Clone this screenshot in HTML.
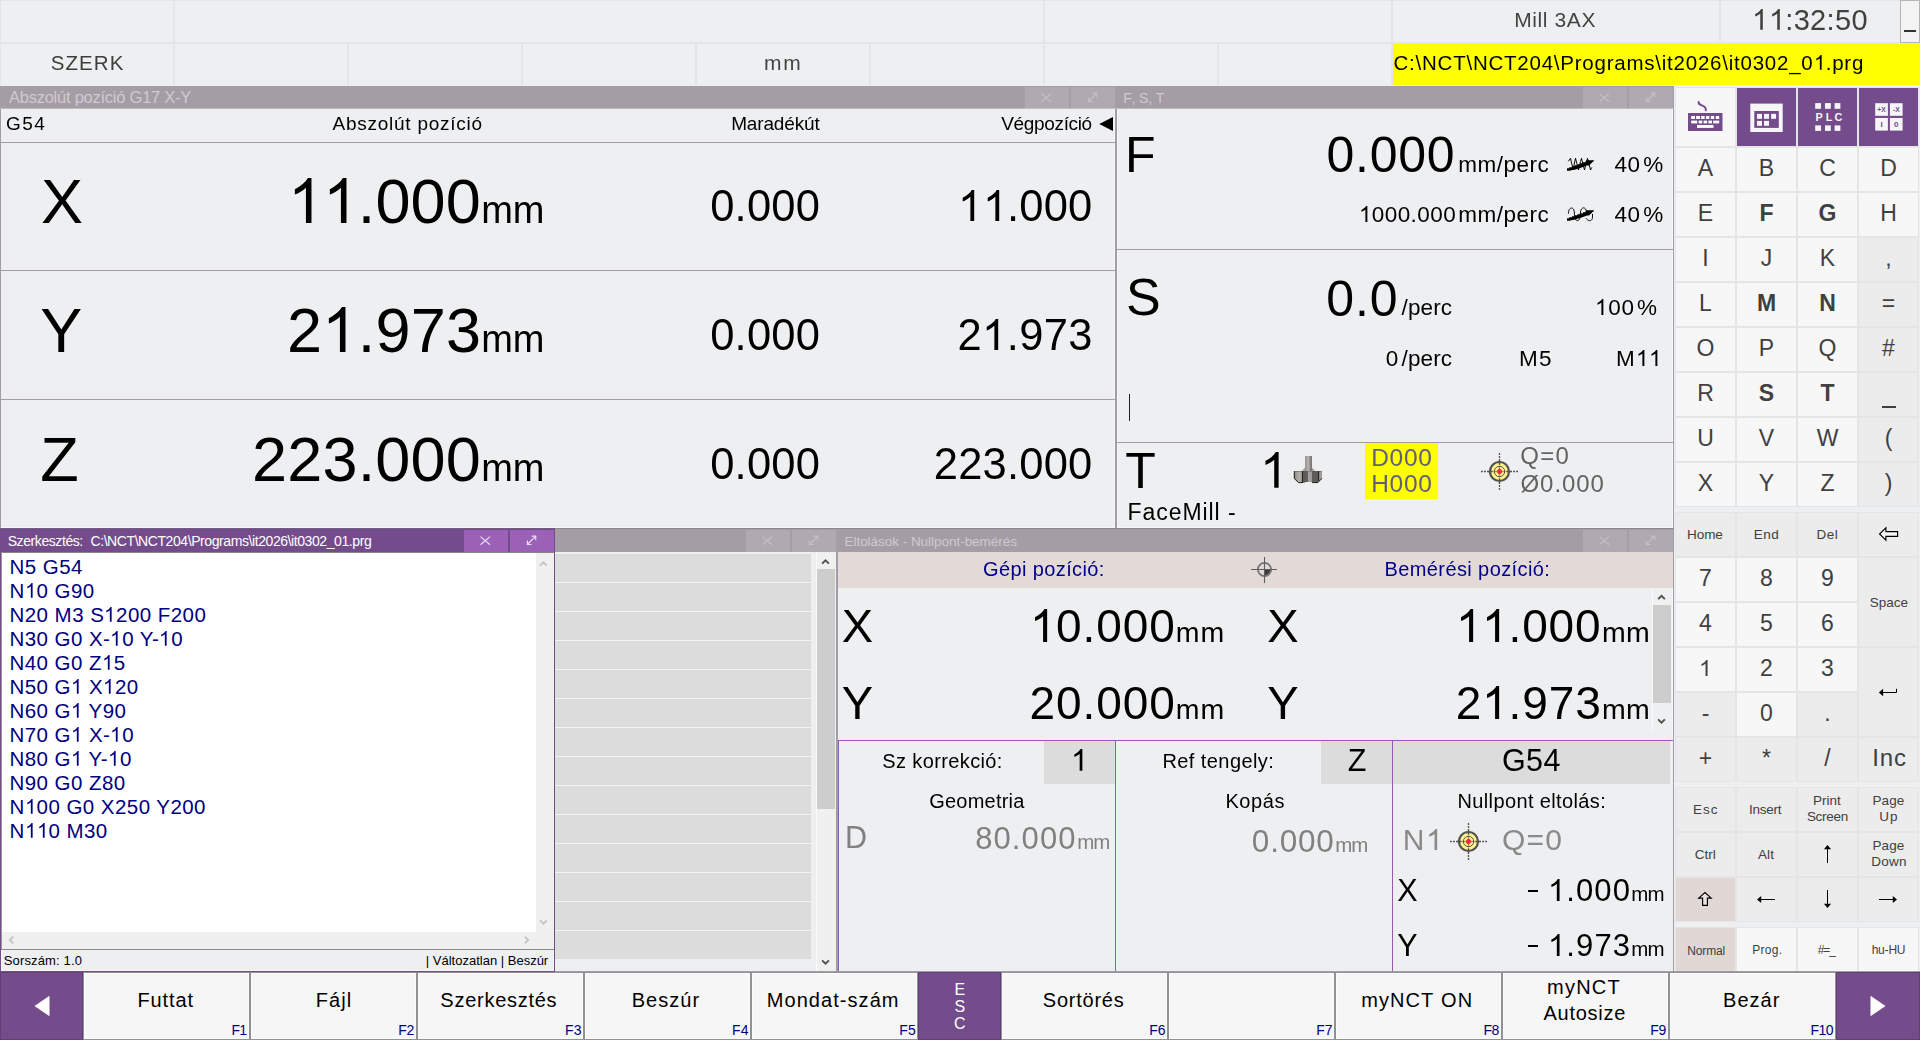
<!DOCTYPE html>
<html><head><meta charset="utf-8"><title>NCT</title>
<style>
html,body{margin:0;padding:0;}
body{width:1920px;height:1040px;overflow:hidden;background:#eeeff1;font-family:"Liberation Sans",sans-serif;position:relative;color:#000;}
.t{position:absolute;line-height:1;white-space:nowrap;font-kerning:none;}
.g1{width:0.55615em;height:0.7158em;vertical-align:baseline;display:inline-block;}
.r{position:absolute;}
.gl{position:absolute;left:0;top:0;width:1920px;height:1040px;will-change:transform;}
</style></head><body>
<div class="r" style="left:0px;top:42px;width:1392px;height:2px;background:#e4e5e7;"></div>
<div class="r" style="left:1392px;top:42px;width:528px;height:2px;background:#e4e5e7;"></div>
<div class="r" style="left:173px;top:0px;width:2px;height:43px;background:#e4e5e7;"></div>
<div class="r" style="left:1043px;top:0px;width:2px;height:43px;background:#e4e5e7;"></div>
<div class="r" style="left:1391px;top:0px;width:2px;height:43px;background:#e4e5e7;"></div>
<div class="r" style="left:1719px;top:0px;width:2px;height:43px;background:#e4e5e7;"></div>
<div class="r" style="left:173px;top:43px;width:2px;height:42px;background:#e4e5e7;"></div>
<div class="r" style="left:347px;top:43px;width:2px;height:42px;background:#e4e5e7;"></div>
<div class="r" style="left:521px;top:43px;width:2px;height:42px;background:#e4e5e7;"></div>
<div class="r" style="left:695px;top:43px;width:2px;height:42px;background:#e4e5e7;"></div>
<div class="r" style="left:869px;top:43px;width:2px;height:42px;background:#e4e5e7;"></div>
<div class="r" style="left:1043px;top:43px;width:2px;height:42px;background:#e4e5e7;"></div>
<div class="r" style="left:1217px;top:43px;width:2px;height:42px;background:#e4e5e7;"></div>
<div class="r" style="left:1391px;top:43px;width:2px;height:42px;background:#e4e5e7;"></div>
<div class="r" style="left:0px;top:0px;width:1920px;height:1px;background:#e4e5e7;"></div>
<div class="r" style="left:0px;top:0px;width:1px;height:86px;background:#e4e5e7;"></div>
<div class="r" style="left:1900px;top:0px;width:20px;height:43px;background:#f3f3f4;border:1px solid #b5b5b8;box-sizing:border-box;"></div>
<div class="r" style="left:1904px;top:30px;width:12px;height:2px;background:#333;"></div>
<div class="r" style="left:1393px;top:44px;width:527px;height:41px;background:#ffff00;"></div>
<div class="r" style="left:0px;top:86px;width:1117px;height:23px;background:#a49da5;"></div>
<div class="r" style="left:1025px;top:87px;width:44px;height:22px;background:#b0a9b1;"></div>
<div class="r" style="left:1071px;top:87px;width:44px;height:22px;background:#b0a9b1;"></div>
<svg class="r" style="left:1040px;top:91px;" width="13" height="13" viewBox="0 0 13 13"><g transform="translate(0.500,0.800)"><path d="M1 1.8 L10.5 10 M10.5 1.8 L1 10" stroke="#c6bfc8" stroke-width="1.2" fill="none"/></g></svg>
<svg class="r" style="left:1086px;top:91px;" width="13" height="13" viewBox="0 0 13 13"><g transform="translate(0.800,0.600)"><path d="M1.6 9.9 L9.9 1.6 M5.8 1.6 H9.9 V5.7 M1.6 5.8 V9.9 H5.7" stroke="#c6bfc8" stroke-width="1.2" fill="none"/></g></svg>
<div class="t" style="left:8.98px;top:89.00px;font-size:16.5px;letter-spacing:-0.244px;color:#d0c9d3;">Abszolút pozíció G17 X-Y</div>
<div class="r" style="left:0px;top:109px;width:1px;height:420px;background:#a29da4;"></div>
<div class="r" style="left:1115px;top:109px;width:2px;height:420px;background:#a29da4;"></div>
<div class="r" style="left:1px;top:527px;width:1113px;height:1px;background:#f6f7f9;"></div>
<div class="r" style="left:1114px;top:109px;width:1px;height:419px;background:#f6f7f9;"></div>
<div class="r" style="left:1px;top:142px;width:1114px;height:1px;background:#a29da4;"></div>
<div class="r" style="left:1px;top:270px;width:1114px;height:1px;background:#a29da4;"></div>
<div class="r" style="left:1px;top:399px;width:1114px;height:1px;background:#a29da4;"></div>
<svg class="r" style="left:1099px;top:116px;" width="15" height="16" viewBox="0 0 15 16"><path d="M14 1 L0.2 8 L14 15 Z" fill="#000"/></svg>
<div class="r" style="left:1117px;top:86px;width:557px;height:23px;background:#a49da5;"></div>
<div class="r" style="left:1583px;top:87px;width:44px;height:22px;background:#b0a9b1;"></div>
<div class="r" style="left:1629px;top:87px;width:44px;height:22px;background:#b0a9b1;"></div>
<svg class="r" style="left:1598px;top:91px;" width="13" height="13" viewBox="0 0 13 13"><g transform="translate(0.500,0.800)"><path d="M1 1.8 L10.5 10 M10.5 1.8 L1 10" stroke="#c6bfc8" stroke-width="1.2" fill="none"/></g></svg>
<svg class="r" style="left:1644px;top:91px;" width="13" height="13" viewBox="0 0 13 13"><g transform="translate(0.800,0.600)"><path d="M1.6 9.9 L9.9 1.6 M5.8 1.6 H9.9 V5.7 M1.6 5.8 V9.9 H5.7" stroke="#c6bfc8" stroke-width="1.2" fill="none"/></g></svg>
<div class="t" style="left:1123.15px;top:91.00px;font-size:14px;letter-spacing:-0.139px;color:#d0c9d3;">F, S, T</div>
<div class="r" style="left:1673px;top:86px;width:1px;height:443px;background:#a29da4;"></div>
<div class="r" style="left:1672px;top:109px;width:1px;height:418px;background:#f6f7f9;"></div>
<div class="r" style="left:0px;top:108px;width:1674px;height:1px;background:rgba(238,239,241,0.35);"></div>
<div class="r" style="left:1117px;top:109px;width:1px;height:419px;background:#f6f7f9;"></div>
<div class="r" style="left:1117px;top:527px;width:556px;height:1px;background:#f6f7f9;"></div>
<div class="r" style="left:1117px;top:249px;width:556px;height:1px;background:#a29da4;"></div>
<div class="r" style="left:1117px;top:442px;width:556px;height:1px;background:#a29da4;"></div>
<svg class="r" style="left:1562px;top:153px;" width="38" height="23" viewBox="0 0 38 23"><path d="M6.3 8.4 L8.5 5.3 L9.6 10 L11.2 17 L12.6 9 L13.5 5.3 L14.8 10.5 L16.5 17 L18.5 8.5 L19.5 5.3 L20.6 10 L22.5 17 L24.5 8.5 L25.5 5.3 L27 11 L28.5 17 L29.8 14.4" stroke="#000" stroke-width="0.95" fill="none"/><path d="M5 17.7 V15.2 L7.2 15.2 L7.2 14.2 L10 14.2 L10 13.2 L12.6 13.2 L12.6 12.2 L15.4 12.2 L15.4 11.2 L18 11.2 L18 10.2 L21 10.2 L21 9.2 L23.6 9.2 L23.6 8.2 L24.6 7.2 L32.2 7.2 L31.4 8.4 L30.2 9.2 L29.2 10.4 L28 11.4 L27 12.6 L25 12.6 L22.4 13.4 L19.6 14.4 L16.4 15.4 L13.6 16.4 L10.6 17 L7.2 17.7 Z" fill="#000"/></svg>
<svg class="r" style="left:1562px;top:203px;" width="38" height="23" viewBox="0 0 38 23"><path d="M6.4 10.8 C6.4 3.4 12 3.4 12.3 9 C12.6 16 13.5 17.6 15.5 17.6 C17.5 17.6 18.2 15 18.4 10 C18.6 3.4 24 3.4 24.3 8.5 M30.5 11 L30.5 14.2 C30.3 17.5 28.5 17.7 27.5 17.6 C26 17.5 25 16.5 24 15.2" stroke="#000" stroke-width="0.95" fill="none"/><path d="M5 17.7 V15.2 L7.2 15.2 L7.2 14.2 L10 14.2 L10 13.2 L12.6 13.2 L12.6 12.2 L15.4 12.2 L15.4 11.2 L18 11.2 L18 10.2 L21 10.2 L21 9.2 L23.6 9.2 L23.6 8.2 L24.6 7.2 L32.2 7.2 L31.4 8.4 L30.2 9.2 L29.2 10.4 L28 11.4 L27 12.6 L25 12.6 L22.4 13.4 L19.6 14.4 L16.4 15.4 L13.6 16.4 L10.6 17 L7.2 17.7 Z" fill="#000"/></svg>
<div class="r" style="left:1129px;top:394px;width:1px;height:27px;background:#222;"></div>
<div class="r" style="left:1365px;top:443px;width:73px;height:56px;background:#ffff00;"></div>
<svg class="r" style="left:1479px;top:451px;" width="41" height="41" viewBox="0 0 41 41"><g transform="translate(0.500,0.500)"><path d="M9.4 20 H1.5 M30.6 20 H38.5 M20 9.4 V1.5 M20 30.6 V38.5" stroke="#575252" stroke-width="1.35" stroke-dasharray="1.9 1.1" fill="none"/><circle cx="20" cy="20" r="9.5" fill="#fff48c" stroke="#575252" stroke-width="2.2"/><path d="M9 20 H13.2 M26.8 20 H31 M20 9 V13.2 M20 26.8 V31" stroke="#575252" stroke-width="1.4"/><circle cx="20" cy="20" r="5.2" fill="none" stroke="#575252" stroke-width="1"/><path d="M14.2 20 H16 M24 20 H25.8 M20 14.2 V16 M20 24 V25.8" stroke="#575252" stroke-width="1.3"/><path d="M20 16.6 L23.4 20 L20 23.4 L16.6 20 Z" fill="#ee2b3b"/></g></svg>
<svg class="r" style="left:1285px;top:448px;" width="50" height="44" viewBox="0 0 50 44"><defs><linearGradient id="shk" x1="0" x2="1" y1="0" y2="0"><stop offset="0" stop-color="#8d8a87"/><stop offset="0.45" stop-color="#b9b6b1"/><stop offset="1" stop-color="#666"/></linearGradient>
<linearGradient id="bl" x1="0" x2="1" y1="0" y2="0"><stop offset="0" stop-color="#8f8c89"/><stop offset="0.6" stop-color="#b3b0ab"/><stop offset="1" stop-color="#a5a29e"/></linearGradient></defs>
<path d="M17 23 L20.1 19.6 H26.9 L30 23 Z" fill="#a29f9b"/>
<rect x="20.1" y="8" width="6.8" height="15" fill="url(#shk)"/>
<path d="M9.2 23 H37 V30.5 L32.8 34.8 H13.4 L9.2 30.5 Z" fill="#5e5c5a"/>
<path d="M9.6 23.4 H17 V34.4 H13.6 L9.6 30.3 Z" fill="url(#bl)"/>
<rect x="22.9" y="23.4" width="4" height="10.6" fill="#a4a19d"/>
<path d="M34 23.4 H37 V30.3 L34 33.3 Z" fill="#9f9c98"/>
<rect x="33" y="23.2" width="1.1" height="9.5" fill="#222"/>
<rect x="16.9" y="23.2" width="1.1" height="11.2" fill="#222"/>
<path d="M9.3 23.2 V30.5 L13.5 34.6 H18" stroke="#1a1a1a" stroke-width="0.9" fill="none"/>
<path d="M27.2 34.6 H32.8 L37 30.3" stroke="#1a1a1a" stroke-width="0.9" fill="none"/>
<path d="M20.5 34 H26.5 L27.2 35 H19.5 Z" fill="#eeeff1"/></svg>
<div class="r" style="left:1675px;top:86px;width:245px;height:886px;background:#eeeff1;"></div>
<div class="r" style="left:1676px;top:88px;width:59px;height:58px;background:#f7f7f7;box-shadow:0 0 0 1px #e4e5e7;"></div>
<div class="r" style="left:1737px;top:88px;width:59px;height:58px;background:#744c8c;box-shadow:0 0 0 1px #e4e5e7;"></div>
<div class="r" style="left:1798px;top:88px;width:59px;height:58px;background:#744c8c;box-shadow:0 0 0 1px #e4e5e7;"></div>
<div class="r" style="left:1859px;top:88px;width:59px;height:58px;background:#744c8c;box-shadow:0 0 0 1px #e4e5e7;"></div>
<div class="r" style="left:1676px;top:148px;width:59px;height:43px;background:#f7f7f7;box-shadow:0 0 0 1px #e4e5e7;"></div>
<div class="t" style="top:157.00px;font-size:23px;color:#404040;left:1305.5px;width:800px;text-align:center;">A</div>
<div class="r" style="left:1737px;top:148px;width:59px;height:43px;background:#f7f7f7;box-shadow:0 0 0 1px #e4e5e7;"></div>
<div class="t" style="top:157.00px;font-size:23px;color:#404040;left:1366.5px;width:800px;text-align:center;">B</div>
<div class="r" style="left:1798px;top:148px;width:59px;height:43px;background:#f7f7f7;box-shadow:0 0 0 1px #e4e5e7;"></div>
<div class="t" style="top:157.00px;font-size:23px;color:#404040;left:1427.5px;width:800px;text-align:center;">C</div>
<div class="r" style="left:1859px;top:148px;width:59px;height:43px;background:#f7f7f7;box-shadow:0 0 0 1px #e4e5e7;"></div>
<div class="t" style="top:157.00px;font-size:23px;color:#404040;left:1488.5px;width:800px;text-align:center;">D</div>
<div class="r" style="left:1676px;top:193px;width:59px;height:43px;background:#f7f7f7;box-shadow:0 0 0 1px #e4e5e7;"></div>
<div class="t" style="top:202.00px;font-size:23px;color:#404040;left:1305.5px;width:800px;text-align:center;">E</div>
<div class="r" style="left:1737px;top:193px;width:59px;height:43px;background:#f7f7f7;box-shadow:0 0 0 1px #e4e5e7;"></div>
<div class="t" style="top:202.00px;font-size:23px;color:#404040;font-weight:bold;left:1366.5px;width:800px;text-align:center;">F</div>
<div class="r" style="left:1798px;top:193px;width:59px;height:43px;background:#f7f7f7;box-shadow:0 0 0 1px #e4e5e7;"></div>
<div class="t" style="top:202.00px;font-size:23px;color:#404040;font-weight:bold;left:1427.5px;width:800px;text-align:center;">G</div>
<div class="r" style="left:1859px;top:193px;width:59px;height:43px;background:#f7f7f7;box-shadow:0 0 0 1px #e4e5e7;"></div>
<div class="t" style="top:202.00px;font-size:23px;color:#404040;left:1488.5px;width:800px;text-align:center;">H</div>
<div class="r" style="left:1676px;top:238px;width:59px;height:43px;background:#f7f7f7;box-shadow:0 0 0 1px #e4e5e7;"></div>
<div class="t" style="top:247.00px;font-size:23px;color:#404040;left:1305.5px;width:800px;text-align:center;">I</div>
<div class="r" style="left:1737px;top:238px;width:59px;height:43px;background:#f7f7f7;box-shadow:0 0 0 1px #e4e5e7;"></div>
<div class="t" style="top:247.00px;font-size:23px;color:#404040;left:1366.5px;width:800px;text-align:center;">J</div>
<div class="r" style="left:1798px;top:238px;width:59px;height:43px;background:#f7f7f7;box-shadow:0 0 0 1px #e4e5e7;"></div>
<div class="t" style="top:247.00px;font-size:23px;color:#404040;left:1427.5px;width:800px;text-align:center;">K</div>
<div class="r" style="left:1859px;top:238px;width:59px;height:43px;background:#ececec;box-shadow:0 0 0 1px #e4e5e7;"></div>
<div class="t" style="top:247.00px;font-size:23px;color:#404040;left:1488.5px;width:800px;text-align:center;">,</div>
<div class="r" style="left:1676px;top:283px;width:59px;height:43px;background:#f7f7f7;box-shadow:0 0 0 1px #e4e5e7;"></div>
<div class="t" style="top:292.00px;font-size:23px;color:#404040;left:1305.5px;width:800px;text-align:center;">L</div>
<div class="r" style="left:1737px;top:283px;width:59px;height:43px;background:#f7f7f7;box-shadow:0 0 0 1px #e4e5e7;"></div>
<div class="t" style="top:292.00px;font-size:23px;color:#404040;font-weight:bold;left:1366.5px;width:800px;text-align:center;">M</div>
<div class="r" style="left:1798px;top:283px;width:59px;height:43px;background:#f7f7f7;box-shadow:0 0 0 1px #e4e5e7;"></div>
<div class="t" style="top:292.00px;font-size:23px;color:#404040;font-weight:bold;left:1427.5px;width:800px;text-align:center;">N</div>
<div class="r" style="left:1859px;top:283px;width:59px;height:43px;background:#ececec;box-shadow:0 0 0 1px #e4e5e7;"></div>
<div class="t" style="top:292.00px;font-size:23px;color:#404040;left:1488.5px;width:800px;text-align:center;">=</div>
<div class="r" style="left:1676px;top:328px;width:59px;height:43px;background:#f7f7f7;box-shadow:0 0 0 1px #e4e5e7;"></div>
<div class="t" style="top:337.00px;font-size:23px;color:#404040;left:1305.5px;width:800px;text-align:center;">O</div>
<div class="r" style="left:1737px;top:328px;width:59px;height:43px;background:#f7f7f7;box-shadow:0 0 0 1px #e4e5e7;"></div>
<div class="t" style="top:337.00px;font-size:23px;color:#404040;left:1366.5px;width:800px;text-align:center;">P</div>
<div class="r" style="left:1798px;top:328px;width:59px;height:43px;background:#f7f7f7;box-shadow:0 0 0 1px #e4e5e7;"></div>
<div class="t" style="top:337.00px;font-size:23px;color:#404040;left:1427.5px;width:800px;text-align:center;">Q</div>
<div class="r" style="left:1859px;top:328px;width:59px;height:43px;background:#ececec;box-shadow:0 0 0 1px #e4e5e7;"></div>
<div class="t" style="top:337.00px;font-size:23px;color:#404040;left:1488.5px;width:800px;text-align:center;">#</div>
<div class="r" style="left:1676px;top:373px;width:59px;height:43px;background:#f7f7f7;box-shadow:0 0 0 1px #e4e5e7;"></div>
<div class="t" style="top:382.00px;font-size:23px;color:#404040;left:1305.5px;width:800px;text-align:center;">R</div>
<div class="r" style="left:1737px;top:373px;width:59px;height:43px;background:#f7f7f7;box-shadow:0 0 0 1px #e4e5e7;"></div>
<div class="t" style="top:382.00px;font-size:23px;color:#404040;font-weight:bold;left:1366.5px;width:800px;text-align:center;">S</div>
<div class="r" style="left:1798px;top:373px;width:59px;height:43px;background:#f7f7f7;box-shadow:0 0 0 1px #e4e5e7;"></div>
<div class="t" style="top:382.00px;font-size:23px;color:#404040;font-weight:bold;left:1427.5px;width:800px;text-align:center;">T</div>
<div class="r" style="left:1859px;top:373px;width:59px;height:43px;background:#ececec;box-shadow:0 0 0 1px #e4e5e7;"></div>
<div class="r" style="left:1881.5px;top:406px;width:14px;height:2px;background:#404040;"></div>
<div class="r" style="left:1676px;top:418px;width:59px;height:43px;background:#f7f7f7;box-shadow:0 0 0 1px #e4e5e7;"></div>
<div class="t" style="top:427.00px;font-size:23px;color:#404040;left:1305.5px;width:800px;text-align:center;">U</div>
<div class="r" style="left:1737px;top:418px;width:59px;height:43px;background:#f7f7f7;box-shadow:0 0 0 1px #e4e5e7;"></div>
<div class="t" style="top:427.00px;font-size:23px;color:#404040;left:1366.5px;width:800px;text-align:center;">V</div>
<div class="r" style="left:1798px;top:418px;width:59px;height:43px;background:#f7f7f7;box-shadow:0 0 0 1px #e4e5e7;"></div>
<div class="t" style="top:427.00px;font-size:23px;color:#404040;left:1427.5px;width:800px;text-align:center;">W</div>
<div class="r" style="left:1859px;top:418px;width:59px;height:43px;background:#ececec;box-shadow:0 0 0 1px #e4e5e7;"></div>
<div class="t" style="top:427.00px;font-size:23px;color:#404040;left:1488.5px;width:800px;text-align:center;">(</div>
<div class="r" style="left:1676px;top:463px;width:59px;height:43px;background:#f7f7f7;box-shadow:0 0 0 1px #e4e5e7;"></div>
<div class="t" style="top:472.00px;font-size:23px;color:#404040;left:1305.5px;width:800px;text-align:center;">X</div>
<div class="r" style="left:1737px;top:463px;width:59px;height:43px;background:#f7f7f7;box-shadow:0 0 0 1px #e4e5e7;"></div>
<div class="t" style="top:472.00px;font-size:23px;color:#404040;left:1366.5px;width:800px;text-align:center;">Y</div>
<div class="r" style="left:1798px;top:463px;width:59px;height:43px;background:#f7f7f7;box-shadow:0 0 0 1px #e4e5e7;"></div>
<div class="t" style="top:472.00px;font-size:23px;color:#404040;left:1427.5px;width:800px;text-align:center;">Z</div>
<div class="r" style="left:1859px;top:463px;width:59px;height:43px;background:#ececec;box-shadow:0 0 0 1px #e4e5e7;"></div>
<div class="t" style="top:472.00px;font-size:23px;color:#404040;left:1488.5px;width:800px;text-align:center;">)</div>
<div class="r" style="left:1676px;top:513px;width:59px;height:43px;background:#ececec;box-shadow:0 0 0 1px #e4e5e7;"></div>
<div class="r" style="left:1737px;top:513px;width:59px;height:43px;background:#ececec;box-shadow:0 0 0 1px #e4e5e7;"></div>
<div class="r" style="left:1798px;top:513px;width:59px;height:43px;background:#ececec;box-shadow:0 0 0 1px #e4e5e7;"></div>
<div class="r" style="left:1859px;top:513px;width:59px;height:43px;background:#ececec;box-shadow:0 0 0 1px #e4e5e7;"></div>
<div class="t" style="left:1687.09px;top:528.00px;font-size:13.5px;letter-spacing:-0.069px;color:#404040;">Home</div>
<div class="t" style="top:528.00px;font-size:13.5px;color:#404040;left:1366.5px;width:800px;text-align:center;letter-spacing:0.5px;">End</div>
<div class="t" style="top:528.00px;font-size:13.5px;color:#404040;left:1427.5px;width:800px;text-align:center;letter-spacing:0.5px;">Del</div>
<svg class="r" style="left:1876px;top:525px;" width="25" height="18" viewBox="0 0 25 18"><path d="M3.6 9 L9.9 2.9 V6.6 H21.6 V11.3 H9.9 V15.1 Z" fill="#f3f3f3" stroke="#000" stroke-width="1.15" stroke-linejoin="miter"/></svg>
<div class="r" style="left:1676px;top:558px;width:59px;height:43px;background:#f7f7f7;box-shadow:0 0 0 1px #e4e5e7;"></div>
<div class="t" style="top:567.00px;font-size:23px;color:#404040;left:1305.5px;width:800px;text-align:center;">7</div>
<div class="r" style="left:1737px;top:558px;width:59px;height:43px;background:#f7f7f7;box-shadow:0 0 0 1px #e4e5e7;"></div>
<div class="t" style="top:567.00px;font-size:23px;color:#404040;left:1366.5px;width:800px;text-align:center;">8</div>
<div class="r" style="left:1798px;top:558px;width:59px;height:43px;background:#f7f7f7;box-shadow:0 0 0 1px #e4e5e7;"></div>
<div class="t" style="top:567.00px;font-size:23px;color:#404040;left:1427.5px;width:800px;text-align:center;">9</div>
<div class="r" style="left:1676px;top:603px;width:59px;height:43px;background:#f7f7f7;box-shadow:0 0 0 1px #e4e5e7;"></div>
<div class="t" style="top:612.00px;font-size:23px;color:#404040;left:1305.5px;width:800px;text-align:center;">4</div>
<div class="r" style="left:1737px;top:603px;width:59px;height:43px;background:#f7f7f7;box-shadow:0 0 0 1px #e4e5e7;"></div>
<div class="t" style="top:612.00px;font-size:23px;color:#404040;left:1366.5px;width:800px;text-align:center;">5</div>
<div class="r" style="left:1798px;top:603px;width:59px;height:43px;background:#f7f7f7;box-shadow:0 0 0 1px #e4e5e7;"></div>
<div class="t" style="top:612.00px;font-size:23px;color:#404040;left:1427.5px;width:800px;text-align:center;">6</div>
<div class="r" style="left:1676px;top:648px;width:59px;height:43px;background:#f7f7f7;box-shadow:0 0 0 1px #e4e5e7;"></div>
<div class="t" style="top:657.00px;font-size:23px;color:#404040;left:1305.5px;width:800px;text-align:center;"><svg class="g1" viewBox="0 0 1139 1466"><path transform="translate(0,1466) scale(1,-1)" d="M763 0H583V1147Q518 1085 412.5 1023T223 930V1104Q374 1175 487 1276T647 1466H763Z" fill="currentColor"/></svg></div>
<div class="r" style="left:1737px;top:648px;width:59px;height:43px;background:#f7f7f7;box-shadow:0 0 0 1px #e4e5e7;"></div>
<div class="t" style="top:657.00px;font-size:23px;color:#404040;left:1366.5px;width:800px;text-align:center;">2</div>
<div class="r" style="left:1798px;top:648px;width:59px;height:43px;background:#f7f7f7;box-shadow:0 0 0 1px #e4e5e7;"></div>
<div class="t" style="top:657.00px;font-size:23px;color:#404040;left:1427.5px;width:800px;text-align:center;">3</div>
<div class="r" style="left:1859px;top:558px;width:59px;height:88px;background:#ececec;box-shadow:0 0 0 1px #e4e5e7;"></div>
<div class="r" style="left:1859px;top:648px;width:59px;height:88px;background:#ececec;box-shadow:0 0 0 1px #e4e5e7;"></div>
<div class="t" style="left:1869.79px;top:596.00px;font-size:13.5px;letter-spacing:0.006px;color:#404040;">Space</div>
<svg class="r" style="left:1878px;top:684px;" width="22" height="14" viewBox="0 0 22 14"><path d="M4 8.5 H18.5 V4.8" stroke="#000" stroke-width="1" fill="none"/><path d="M0.9 8.5 L5.1 4.8 V12.2 Z" fill="#000"/></svg>
<div class="r" style="left:1676px;top:693px;width:59px;height:43px;background:#ececec;box-shadow:0 0 0 1px #e4e5e7;"></div>
<div class="r" style="left:1737px;top:693px;width:59px;height:43px;background:#f7f7f7;box-shadow:0 0 0 1px #e4e5e7;"></div>
<div class="r" style="left:1798px;top:693px;width:59px;height:43px;background:#ececec;box-shadow:0 0 0 1px #e4e5e7;"></div>
<div class="t" style="top:702.00px;font-size:23px;color:#404040;left:1305.5px;width:800px;text-align:center;">-</div>
<div class="t" style="top:702.00px;font-size:23px;color:#404040;left:1366.5px;width:800px;text-align:center;">0</div>
<div class="t" style="top:702.00px;font-size:23px;color:#404040;left:1427.5px;width:800px;text-align:center;">.</div>
<div class="r" style="left:1676px;top:738px;width:59px;height:43px;background:#ececec;box-shadow:0 0 0 1px #e4e5e7;"></div>
<div class="r" style="left:1737px;top:738px;width:59px;height:43px;background:#ececec;box-shadow:0 0 0 1px #e4e5e7;"></div>
<div class="r" style="left:1798px;top:738px;width:59px;height:43px;background:#ececec;box-shadow:0 0 0 1px #e4e5e7;"></div>
<div class="r" style="left:1859px;top:738px;width:59px;height:43px;background:#ececec;box-shadow:0 0 0 1px #e4e5e7;"></div>
<div class="t" style="top:747.00px;font-size:23px;color:#404040;left:1305.5px;width:800px;text-align:center;">+</div>
<div class="t" style="top:747.00px;font-size:23px;color:#404040;left:1366.5px;width:800px;text-align:center;">*</div>
<div class="t" style="top:747.00px;font-size:23px;color:#404040;left:1427.5px;width:800px;text-align:center;">/</div>
<div class="t" style="left:1872.29px;top:746.00px;font-size:24px;letter-spacing:0.858px;color:#404040;">Inc</div>
<div class="r" style="left:1676px;top:788px;width:59px;height:43px;background:#ececec;box-shadow:0 0 0 1px #e4e5e7;"></div>
<div class="r" style="left:1737px;top:788px;width:59px;height:43px;background:#ececec;box-shadow:0 0 0 1px #e4e5e7;"></div>
<div class="r" style="left:1798px;top:788px;width:59px;height:43px;background:#ececec;box-shadow:0 0 0 1px #e4e5e7;"></div>
<div class="r" style="left:1859px;top:788px;width:59px;height:43px;background:#ececec;box-shadow:0 0 0 1px #e4e5e7;"></div>
<div class="r" style="left:1676px;top:833px;width:59px;height:43px;background:#ececec;box-shadow:0 0 0 1px #e4e5e7;"></div>
<div class="r" style="left:1737px;top:833px;width:59px;height:43px;background:#ececec;box-shadow:0 0 0 1px #e4e5e7;"></div>
<div class="r" style="left:1798px;top:833px;width:59px;height:43px;background:#ececec;box-shadow:0 0 0 1px #e4e5e7;"></div>
<div class="r" style="left:1859px;top:833px;width:59px;height:43px;background:#ececec;box-shadow:0 0 0 1px #e4e5e7;"></div>
<div class="t" style="left:1692.89px;top:803.00px;font-size:13.5px;letter-spacing:1.027px;color:#404040;">Esc</div>
<div class="t" style="left:1748.96px;top:803.00px;font-size:13.5px;letter-spacing:-0.226px;color:#404040;">Insert</div>
<div class="t" style="left:1813.09px;top:794.00px;font-size:13.5px;letter-spacing:-0.040px;color:#404040;">Print</div>
<div class="t" style="left:1806.89px;top:810.00px;font-size:13.5px;letter-spacing:-0.299px;color:#404040;">Screen</div>
<div class="t" style="left:1872.39px;top:794.00px;font-size:13.5px;letter-spacing:0.125px;color:#404040;">Page</div>
<div class="t" style="left:1879.16px;top:810.00px;font-size:13.5px;letter-spacing:1.044px;color:#404040;">Up</div>
<div class="t" style="left:1694.72px;top:848.00px;font-size:13.5px;letter-spacing:-0.004px;color:#404040;">Ctrl</div>
<div class="t" style="left:1757.98px;top:848.00px;font-size:13.5px;letter-spacing:0.079px;color:#404040;">Alt</div>
<div class="t" style="left:1872.39px;top:839.00px;font-size:13.5px;letter-spacing:0.125px;color:#404040;">Page</div>
<div class="t" style="left:1871.19px;top:855.00px;font-size:13.5px;letter-spacing:0.255px;color:#404040;">Down</div>
<svg class="r" style="left:1823px;top:845px;" width="9" height="19" viewBox="0 0 9 19"><g transform="translate(0.500,0.000)"><path d="M4 3 V18" stroke="#000" stroke-width="1" fill="none"/><path d="M4 0 L0.4 4.2 H7.6 Z" fill="#000"/></g></svg>
<div class="r" style="left:1676px;top:878px;width:59px;height:43px;background:#e1d8d6;box-shadow:0 0 0 1px #e4e5e7;"></div>
<div class="r" style="left:1737px;top:878px;width:59px;height:43px;background:#ececec;box-shadow:0 0 0 1px #e4e5e7;"></div>
<div class="r" style="left:1798px;top:878px;width:59px;height:43px;background:#ececec;box-shadow:0 0 0 1px #e4e5e7;"></div>
<div class="r" style="left:1859px;top:878px;width:59px;height:43px;background:#ececec;box-shadow:0 0 0 1px #e4e5e7;"></div>
<svg class="r" style="left:1696px;top:890px;" width="18" height="18" viewBox="0 0 18 18"><path d="M8.95 2.5 L15.2 8.1 H11.4 V15.3 H6.6 V8.1 H2.7 Z" fill="#e9e2e0" stroke="#000" stroke-width="1.15" stroke-linejoin="miter"/></svg>
<svg class="r" style="left:1757px;top:895px;" width="19" height="9" viewBox="0 0 19 9"><g transform="translate(0.000,0.500)"><path d="M3 4 H18" stroke="#000" stroke-width="1" fill="none"/><path d="M0 4 L4.2 0.4 V7.6 Z" fill="#000"/></g></svg>
<svg class="r" style="left:1823px;top:890px;" width="9" height="19" viewBox="0 0 9 19"><g transform="translate(0.500,0.000)"><path d="M4 0 V15" stroke="#000" stroke-width="1" fill="none"/><path d="M4 18 L0.4 13.8 H7.6 Z" fill="#000"/></g></svg>
<svg class="r" style="left:1879px;top:895px;" width="19" height="9" viewBox="0 0 19 9"><g transform="translate(0.000,0.500)"><path d="M0 4 H15" stroke="#000" stroke-width="1" fill="none"/><path d="M18 4 L13.8 0.4 V7.6 Z" fill="#000"/></g></svg>
<div class="r" style="left:1676px;top:928px;width:59px;height:43px;background:#e1d8d6;box-shadow:0 0 0 1px #e4e5e7;"></div>
<div class="r" style="left:1737px;top:928px;width:59px;height:43px;background:#f7f7f7;box-shadow:0 0 0 1px #e4e5e7;"></div>
<div class="r" style="left:1798px;top:928px;width:59px;height:43px;background:#f7f7f7;box-shadow:0 0 0 1px #e4e5e7;"></div>
<div class="r" style="left:1859px;top:928px;width:59px;height:43px;background:#f7f7f7;box-shadow:0 0 0 1px #e4e5e7;"></div>
<div class="t" style="left:1687.32px;top:945.00px;font-size:12px;letter-spacing:-0.158px;color:#404040;">Normal</div>
<div class="t" style="left:1752.32px;top:944.00px;font-size:12px;letter-spacing:0.273px;color:#404040;">Prog.</div>
<div class="t" style="left:1817.65px;top:944.00px;font-size:12px;letter-spacing:-1.015px;color:#404040;">#=_</div>
<div class="t" style="left:1871.67px;top:944.00px;font-size:12px;letter-spacing:-0.207px;color:#404040;">hu-HU</div>
<svg class="r" style="left:1676px;top:88px;" width="59" height="58" viewBox="0 0 59 58"><rect x="12" y="25" width="34.5" height="18" fill="#744c8c"/><rect x="15.2" y="28" width="3.8" height="3" fill="#fff"/><rect x="20.1" y="28" width="3.9" height="3" fill="#fff"/><rect x="25.1" y="28" width="3.5" height="3" fill="#fff"/><rect x="29.9" y="28" width="3.5" height="3" fill="#fff"/><rect x="34.9" y="28" width="3.3" height="3" fill="#fff"/><rect x="39.8" y="28" width="3.4" height="3" fill="#fff"/><rect x="15.2" y="32.6" width="6.0" height="2.8" fill="#fff"/><rect x="22.7" y="32.6" width="3.5" height="2.8" fill="#fff"/><rect x="27.6" y="32.6" width="3.5" height="2.8" fill="#fff"/><rect x="32.4" y="32.6" width="3.6" height="2.8" fill="#fff"/><rect x="37.2" y="32.6" width="6.0" height="2.8" fill="#fff"/><rect x="21" y="37" width="16.5" height="2.9" fill="#fff"/><path d="M22.6 14 C22 19 30.5 15.5 29.8 22.3" stroke="#744c8c" stroke-width="1.9" fill="none" stroke-linecap="round"/></svg>
<svg class="r" style="left:1737px;top:88px;" width="59" height="58" viewBox="0 0 59 58"><rect x="13.3" y="15.6" width="32.4" height="28.4" fill="#f6f6f8"/><rect x="17.3" y="23" width="24.5" height="16.9" fill="#744c8c"/><rect x="20" y="25.9" width="5" height="4.9" fill="#f6f6f8"/><rect x="27" y="25.9" width="5" height="4.9" fill="#f6f6f8"/><rect x="34.1" y="25.9" width="5" height="4.9" fill="#f6f6f8"/><rect x="20" y="32.9" width="5" height="4.9" fill="#f6f6f8"/><rect x="27" y="32.9" width="5" height="4.9" fill="#f6f6f8"/></svg>
<svg class="r" style="left:1798px;top:88px;" width="59" height="58" viewBox="0 0 59 58"><rect x="17.2" y="15.1" width="5.8" height="5.7" fill="#f6f6f8"/><rect x="17.2" y="37.4" width="5.8" height="5.5" fill="#f6f6f8"/><rect x="27" y="15.1" width="5.8" height="5.7" fill="#f6f6f8"/><rect x="27" y="37.4" width="5.8" height="5.5" fill="#f6f6f8"/><rect x="36.6" y="15.1" width="5.8" height="5.7" fill="#f6f6f8"/><rect x="36.6" y="37.4" width="5.8" height="5.5" fill="#f6f6f8"/><text x="21.05" y="32.8" font-family="Liberation Sans" font-weight="bold" font-size="10.8" fill="#f6f6f8" text-anchor="middle">P</text><text x="30.95" y="32.8" font-family="Liberation Sans" font-weight="bold" font-size="10.8" fill="#f6f6f8" text-anchor="middle">L</text><text x="40.3" y="32.8" font-family="Liberation Sans" font-weight="bold" font-size="10.8" fill="#f6f6f8" text-anchor="middle">C</text></svg>
<svg class="r" style="left:1859px;top:88px;" width="59" height="58" viewBox="0 0 59 58"><rect x="16.2" y="15.2" width="12.7" height="12.6" fill="#f6f6f8"/><rect x="16.2" y="30" width="12.7" height="12.6" fill="#f6f6f8"/><rect x="30.9" y="15.2" width="12.7" height="12.6" fill="#f6f6f8"/><rect x="30.9" y="30" width="12.7" height="12.6" fill="#f6f6f8"/><text x="22.5" y="24" font-family="Liberation Sans" font-weight="bold" font-size="6.8" fill="#744c8c" text-anchor="middle">+X</text><text x="37.3" y="24" font-family="Liberation Sans" font-weight="bold" font-size="6.8" fill="#744c8c" text-anchor="middle">-X</text><text x="22.5" y="38.8" font-family="Liberation Sans" font-weight="bold" font-size="8" fill="#744c8c" text-anchor="middle">I</text><text x="37.3" y="38.8" font-family="Liberation Sans" font-weight="bold" font-size="8" fill="#744c8c" text-anchor="middle">0</text></svg>
<div class="r" style="left:0px;top:528px;width:555px;height:24px;background:#744c8c;"></div>
<div class="r" style="left:464px;top:530px;width:44px;height:22px;background:#9a61b6;"></div>
<div class="r" style="left:510px;top:530px;width:44px;height:22px;background:#9a61b6;"></div>
<svg class="r" style="left:479px;top:534px;" width="13" height="13" viewBox="0 0 13 13"><g transform="translate(0.500,0.800)"><path d="M1 1.8 L10.5 10 M10.5 1.8 L1 10" stroke="#e9dcf0" stroke-width="1.2" fill="none"/></g></svg>
<svg class="r" style="left:525px;top:534px;" width="13" height="13" viewBox="0 0 13 13"><g transform="translate(0.800,0.600)"><path d="M1.6 9.9 L9.9 1.6 M5.8 1.6 H9.9 V5.7 M1.6 5.8 V9.9 H5.7" stroke="#e9dcf0" stroke-width="1.2" fill="none"/></g></svg>
<div class="t" style="left:7.67px;top:534.00px;font-size:14px;letter-spacing:-0.412px;color:#fff;">Szerkesztés:</div>
<div class="t" style="left:90.49px;top:534.00px;font-size:14px;letter-spacing:-0.419px;color:#fff;">C:\NCT\NCT204\Programs\it2026\it0302_01.prg</div>
<div class="r" style="left:2px;top:552px;width:534px;height:380px;background:#ffffff;"></div>
<div class="r" style="left:536px;top:552px;width:18px;height:380px;background:#f0f0f0;"></div>
<div class="r" style="left:2px;top:932px;width:552px;height:17px;background:#f0f0f0;"></div>
<div class="r" style="left:1px;top:552px;width:553px;height:1px;background:#858587;"></div>
<div class="r" style="left:1px;top:552px;width:1px;height:397px;background:#9a9a9c;"></div>
<div class="r" style="left:1px;top:949px;width:553px;height:1px;background:#8a8a8a;"></div>
<div class="r" style="left:1px;top:950px;width:553px;height:20px;background:#eeeff1;"></div>
<div class="r" style="left:1px;top:950px;width:1px;height:21px;background:#f8f8f8;"></div>
<div class="r" style="left:553px;top:950px;width:1px;height:21px;background:#f8f8f8;"></div>
<div class="r" style="left:1px;top:970px;width:553px;height:1px;background:#f5f8f7;"></div>
<div class="r" style="left:0px;top:552px;width:1px;height:420px;background:#744c8c;"></div>
<div class="r" style="left:554px;top:552px;width:1px;height:420px;background:#744c8c;"></div>
<div class="r" style="left:0px;top:971px;width:555px;height:1px;background:#744c8c;"></div>
<svg class="r" style="left:539px;top:560px;" width="10" height="7" viewBox="0 0 10 7"><g transform="translate(0.000,0.500)"><path d="M1.1 5.2 L4.5 1.8 L7.9 5.2" stroke="#c4c4c4" stroke-width="1.9" fill="none"/></g></svg>
<svg class="r" style="left:539px;top:919px;" width="10" height="7" viewBox="0 0 10 7"><g transform="translate(0.000,0.500)"><path d="M1.1 0.8 L4.5 4.2 L7.9 0.8" stroke="#c4c4c4" stroke-width="1.9" fill="none"/></g></svg>
<svg class="r" style="left:8px;top:935px;" width="7" height="10" viewBox="0 0 7 10"><g transform="translate(0.000,0.500)"><path d="M5.2 1.1 L1.8 4.5 L5.2 7.9" stroke="#c4c4c4" stroke-width="1.9" fill="none"/></g></svg>
<svg class="r" style="left:524px;top:935px;" width="7" height="10" viewBox="0 0 7 10"><g transform="translate(0.000,0.500)"><path d="M0.8 1.1 L4.2 4.5 L0.8 7.9" stroke="#c4c4c4" stroke-width="1.9" fill="none"/></g></svg>
<div class="t" style="top:557.00px;font-size:20.5px;color:#000080;left:9.5px;letter-spacing:0.45px;font-kerning:normal;">N5 G54</div>
<div class="t" style="top:581.00px;font-size:20.5px;color:#000080;left:9.5px;letter-spacing:0.45px;font-kerning:normal;">N<svg class="g1" style="margin-right:0.450px" viewBox="0 0 1139 1466"><path transform="translate(0,1466) scale(1,-1)" d="M763 0H583V1147Q518 1085 412.5 1023T223 930V1104Q374 1175 487 1276T647 1466H763Z" fill="currentColor"/></svg>0 G90</div>
<div class="t" style="top:605.00px;font-size:20.5px;color:#000080;left:9.5px;letter-spacing:0.45px;font-kerning:normal;">N20 M3 S<svg class="g1" style="margin-right:0.450px" viewBox="0 0 1139 1466"><path transform="translate(0,1466) scale(1,-1)" d="M763 0H583V1147Q518 1085 412.5 1023T223 930V1104Q374 1175 487 1276T647 1466H763Z" fill="currentColor"/></svg>200 F200</div>
<div class="t" style="top:629.00px;font-size:20.5px;color:#000080;left:9.5px;letter-spacing:0.45px;font-kerning:normal;">N30 G0 X-<svg class="g1" style="margin-right:0.450px" viewBox="0 0 1139 1466"><path transform="translate(0,1466) scale(1,-1)" d="M763 0H583V1147Q518 1085 412.5 1023T223 930V1104Q374 1175 487 1276T647 1466H763Z" fill="currentColor"/></svg>0 Y-<svg class="g1" style="margin-right:0.450px" viewBox="0 0 1139 1466"><path transform="translate(0,1466) scale(1,-1)" d="M763 0H583V1147Q518 1085 412.5 1023T223 930V1104Q374 1175 487 1276T647 1466H763Z" fill="currentColor"/></svg>0</div>
<div class="t" style="top:653.00px;font-size:20.5px;color:#000080;left:9.5px;letter-spacing:0.45px;font-kerning:normal;">N40 G0 Z<svg class="g1" style="margin-right:0.450px" viewBox="0 0 1139 1466"><path transform="translate(0,1466) scale(1,-1)" d="M763 0H583V1147Q518 1085 412.5 1023T223 930V1104Q374 1175 487 1276T647 1466H763Z" fill="currentColor"/></svg>5</div>
<div class="t" style="top:677.00px;font-size:20.5px;color:#000080;left:9.5px;letter-spacing:0.45px;font-kerning:normal;">N50 G<svg class="g1" style="margin-right:0.450px" viewBox="0 0 1139 1466"><path transform="translate(0,1466) scale(1,-1)" d="M763 0H583V1147Q518 1085 412.5 1023T223 930V1104Q374 1175 487 1276T647 1466H763Z" fill="currentColor"/></svg> X<svg class="g1" style="margin-right:0.450px" viewBox="0 0 1139 1466"><path transform="translate(0,1466) scale(1,-1)" d="M763 0H583V1147Q518 1085 412.5 1023T223 930V1104Q374 1175 487 1276T647 1466H763Z" fill="currentColor"/></svg>20</div>
<div class="t" style="top:701.00px;font-size:20.5px;color:#000080;left:9.5px;letter-spacing:0.45px;font-kerning:normal;">N60 G<svg class="g1" style="margin-right:0.450px" viewBox="0 0 1139 1466"><path transform="translate(0,1466) scale(1,-1)" d="M763 0H583V1147Q518 1085 412.5 1023T223 930V1104Q374 1175 487 1276T647 1466H763Z" fill="currentColor"/></svg> Y90</div>
<div class="t" style="top:725.00px;font-size:20.5px;color:#000080;left:9.5px;letter-spacing:0.45px;font-kerning:normal;">N70 G<svg class="g1" style="margin-right:0.450px" viewBox="0 0 1139 1466"><path transform="translate(0,1466) scale(1,-1)" d="M763 0H583V1147Q518 1085 412.5 1023T223 930V1104Q374 1175 487 1276T647 1466H763Z" fill="currentColor"/></svg> X-<svg class="g1" style="margin-right:0.450px" viewBox="0 0 1139 1466"><path transform="translate(0,1466) scale(1,-1)" d="M763 0H583V1147Q518 1085 412.5 1023T223 930V1104Q374 1175 487 1276T647 1466H763Z" fill="currentColor"/></svg>0</div>
<div class="t" style="top:749.00px;font-size:20.5px;color:#000080;left:9.5px;letter-spacing:0.45px;font-kerning:normal;">N80 G<svg class="g1" style="margin-right:0.450px" viewBox="0 0 1139 1466"><path transform="translate(0,1466) scale(1,-1)" d="M763 0H583V1147Q518 1085 412.5 1023T223 930V1104Q374 1175 487 1276T647 1466H763Z" fill="currentColor"/></svg> Y-<svg class="g1" style="margin-right:0.450px" viewBox="0 0 1139 1466"><path transform="translate(0,1466) scale(1,-1)" d="M763 0H583V1147Q518 1085 412.5 1023T223 930V1104Q374 1175 487 1276T647 1466H763Z" fill="currentColor"/></svg>0</div>
<div class="t" style="top:773.00px;font-size:20.5px;color:#000080;left:9.5px;letter-spacing:0.45px;font-kerning:normal;">N90 G0 Z80</div>
<div class="t" style="top:797.00px;font-size:20.5px;color:#000080;left:9.5px;letter-spacing:0.45px;font-kerning:normal;">N<svg class="g1" style="margin-right:0.450px" viewBox="0 0 1139 1466"><path transform="translate(0,1466) scale(1,-1)" d="M763 0H583V1147Q518 1085 412.5 1023T223 930V1104Q374 1175 487 1276T647 1466H763Z" fill="currentColor"/></svg>00 G0 X250 Y200</div>
<div class="t" style="top:821.00px;font-size:20.5px;color:#000080;left:9.5px;letter-spacing:0.45px;font-kerning:normal;">N<svg class="g1" style="margin-right:0.450px" viewBox="0 0 1139 1466"><path transform="translate(0,1466) scale(1,-1)" d="M763 0H583V1147Q518 1085 412.5 1023T223 930V1104Q374 1175 487 1276T647 1466H763Z" fill="currentColor"/></svg><svg class="g1" style="margin-right:0.450px" viewBox="0 0 1139 1466"><path transform="translate(0,1466) scale(1,-1)" d="M763 0H583V1147Q518 1085 412.5 1023T223 930V1104Q374 1175 487 1276T647 1466H763Z" fill="currentColor"/></svg>0 M30</div>
<div class="t" style="left:3.82px;top:954.00px;font-size:13px;letter-spacing:0.137px;">Sorszám: 1.0</div>
<div class="t" style="top:954.00px;font-size:13px;right:1371.8px;">| Változatlan | Beszúr</div>
<div class="r" style="left:555px;top:528px;width:283px;height:24px;background:#a49da5;"></div>
<div class="r" style="left:746px;top:530px;width:44px;height:22px;background:#b0a9b1;"></div>
<div class="r" style="left:792px;top:530px;width:44px;height:22px;background:#b0a9b1;"></div>
<svg class="r" style="left:761px;top:534px;" width="13" height="13" viewBox="0 0 13 13"><g transform="translate(0.500,0.800)"><path d="M1 1.8 L10.5 10 M10.5 1.8 L1 10" stroke="#c6bfc8" stroke-width="1.2" fill="none"/></g></svg>
<svg class="r" style="left:807px;top:534px;" width="13" height="13" viewBox="0 0 13 13"><g transform="translate(0.800,0.600)"><path d="M1.6 9.9 L9.9 1.6 M5.8 1.6 H9.9 V5.7 M1.6 5.8 V9.9 H5.7" stroke="#c6bfc8" stroke-width="1.2" fill="none"/></g></svg>
<div class="r" style="left:555px;top:553px;width:256px;height:29px;background:#dcdcdc;"></div>
<div class="r" style="left:555px;top:582px;width:256px;height:29px;background:#dcdcdc;"></div>
<div class="r" style="left:555px;top:582px;width:256px;height:1px;background:#f2f2f2;"></div>
<div class="r" style="left:555px;top:611px;width:256px;height:29px;background:#dcdcdc;"></div>
<div class="r" style="left:555px;top:611px;width:256px;height:1px;background:#f2f2f2;"></div>
<div class="r" style="left:555px;top:640px;width:256px;height:29px;background:#dcdcdc;"></div>
<div class="r" style="left:555px;top:640px;width:256px;height:1px;background:#f2f2f2;"></div>
<div class="r" style="left:555px;top:669px;width:256px;height:29px;background:#dcdcdc;"></div>
<div class="r" style="left:555px;top:669px;width:256px;height:1px;background:#f2f2f2;"></div>
<div class="r" style="left:555px;top:698px;width:256px;height:29px;background:#dcdcdc;"></div>
<div class="r" style="left:555px;top:698px;width:256px;height:1px;background:#f2f2f2;"></div>
<div class="r" style="left:555px;top:727px;width:256px;height:29px;background:#dcdcdc;"></div>
<div class="r" style="left:555px;top:727px;width:256px;height:1px;background:#f2f2f2;"></div>
<div class="r" style="left:555px;top:756px;width:256px;height:29px;background:#dcdcdc;"></div>
<div class="r" style="left:555px;top:756px;width:256px;height:1px;background:#f2f2f2;"></div>
<div class="r" style="left:555px;top:785px;width:256px;height:29px;background:#dcdcdc;"></div>
<div class="r" style="left:555px;top:785px;width:256px;height:1px;background:#f2f2f2;"></div>
<div class="r" style="left:555px;top:814px;width:256px;height:29px;background:#dcdcdc;"></div>
<div class="r" style="left:555px;top:814px;width:256px;height:1px;background:#f2f2f2;"></div>
<div class="r" style="left:555px;top:843px;width:256px;height:29px;background:#dcdcdc;"></div>
<div class="r" style="left:555px;top:843px;width:256px;height:1px;background:#f2f2f2;"></div>
<div class="r" style="left:555px;top:872px;width:256px;height:29px;background:#dcdcdc;"></div>
<div class="r" style="left:555px;top:872px;width:256px;height:1px;background:#f2f2f2;"></div>
<div class="r" style="left:555px;top:901px;width:256px;height:29px;background:#dcdcdc;"></div>
<div class="r" style="left:555px;top:901px;width:256px;height:1px;background:#f2f2f2;"></div>
<div class="r" style="left:555px;top:930px;width:256px;height:29px;background:#dcdcdc;"></div>
<div class="r" style="left:555px;top:930px;width:256px;height:1px;background:#f2f2f2;"></div>
<div class="r" style="left:555px;top:552px;width:256px;height:2px;background:#eeeff1;"></div>
<div class="r" style="left:555px;top:959px;width:256px;height:13px;background:#eeeff1;"></div>
<div class="r" style="left:816px;top:552px;width:1px;height:419px;background:#fafafa;"></div>
<div class="r" style="left:817px;top:552px;width:18px;height:419px;background:#f0f0f0;"></div>
<div class="r" style="left:817px;top:569px;width:18px;height:240px;background:#cdcdcd;"></div>
<svg class="r" style="left:821px;top:558px;" width="10" height="7" viewBox="0 0 10 7"><g transform="translate(0.000,0.500)"><path d="M1.1 5.2 L4.5 1.8 L7.9 5.2" stroke="#505050" stroke-width="1.9" fill="none"/></g></svg>
<svg class="r" style="left:821px;top:959px;" width="10" height="7" viewBox="0 0 10 7"><g transform="translate(0.000,0.500)"><path d="M1.1 0.8 L4.5 4.2 L7.9 0.8" stroke="#505050" stroke-width="1.9" fill="none"/></g></svg>
<div class="r" style="left:836px;top:552px;width:2px;height:420px;background:#a29da4;"></div>
<div class="r" style="left:838px;top:528px;width:836px;height:24px;background:#a49da5;"></div>
<div class="r" style="left:1583px;top:530px;width:44px;height:22px;background:#b0a9b1;"></div>
<div class="r" style="left:1629px;top:530px;width:44px;height:22px;background:#b0a9b1;"></div>
<svg class="r" style="left:1598px;top:534px;" width="13" height="13" viewBox="0 0 13 13"><g transform="translate(0.500,0.800)"><path d="M1 1.8 L10.5 10 M10.5 1.8 L1 10" stroke="#c6bfc8" stroke-width="1.2" fill="none"/></g></svg>
<svg class="r" style="left:1644px;top:534px;" width="13" height="13" viewBox="0 0 13 13"><g transform="translate(0.800,0.600)"><path d="M1.6 9.9 L9.9 1.6 M5.8 1.6 H9.9 V5.7 M1.6 5.8 V9.9 H5.7" stroke="#c6bfc8" stroke-width="1.2" fill="none"/></g></svg>
<div class="t" style="left:844.49px;top:535.00px;font-size:13.5px;letter-spacing:-0.031px;color:#d0c9d3;">Eltolások - Nullpont-bemérés</div>
<div class="r" style="left:838px;top:552px;width:835px;height:36px;background:#e3dad8;"></div>
<div class="r" style="left:1673px;top:528px;width:1px;height:444px;background:#a29da4;"></div>
<div class="r" style="left:1672px;top:588px;width:1px;height:152px;background:#f6f7f9;"></div>
<svg class="r" style="left:1250px;top:555px;" width="30" height="30" viewBox="0 0 30 30"><circle cx="14.5" cy="14.5" r="6.6" fill="none" stroke="#737575" stroke-width="1.8"/><path d="M14.5 14.5 H20.2 A5.7 5.7 0 0 1 14.5 20.2 Z" fill="#3a3a3a"/><path d="M1 14.5 H27 M14.5 2 V28" stroke="#5e5e5e" stroke-width="1.1"/></svg>
<div class="r" style="left:1652px;top:588px;width:20px;height:143px;background:#eff0f1;"></div>
<div class="r" style="left:1652px;top:588px;width:1px;height:143px;background:#f9f9fa;"></div>
<div class="r" style="left:1653px;top:605px;width:18px;height:98px;background:#cdcdcd;"></div>
<svg class="r" style="left:1657px;top:594px;" width="9" height="6" viewBox="0 0 9 6"><path d="M1.1 5.2 L4.5 1.8 L7.9 5.2" stroke="#505050" stroke-width="1.9" fill="none"/></svg>
<svg class="r" style="left:1657px;top:718px;" width="10" height="7" viewBox="0 0 10 7"><g transform="translate(0.000,0.500)"><path d="M1.1 0.8 L4.5 4.2 L7.9 0.8" stroke="#505050" stroke-width="1.9" fill="none"/></g></svg>
<div class="r" style="left:838px;top:740px;width:835px;height:1px;background:#9b59b6;"></div>
<div class="r" style="left:838px;top:740px;width:1px;height:231px;background:#9b59b6;"></div>
<div class="r" style="left:1115px;top:740px;width:1px;height:231px;background:#9b59b6;"></div>
<div class="r" style="left:1392px;top:740px;width:1px;height:231px;background:#9b59b6;"></div>
<div class="r" style="left:1044px;top:741px;width:71px;height:43px;background:#dcdcdc;"></div>
<div class="r" style="left:1321px;top:741px;width:71px;height:43px;background:#dcdcdc;"></div>
<div class="r" style="left:1393px;top:741px;width:277px;height:43px;background:#dcdcdc;"></div>
<div class="r" style="left:1528.4px;top:890.1px;width:9.8px;height:2.35px;background:#000;"></div>
<div class="r" style="left:1528.4px;top:945.1px;width:9.8px;height:2.35px;background:#000;"></div>
<svg class="r" style="left:1448px;top:821px;" width="41" height="41" viewBox="0 0 41 41"><g transform="translate(0.500,0.500)"><path d="M9.4 20 H1.5 M30.6 20 H38.5 M20 9.4 V1.5 M20 30.6 V38.5" stroke="#575252" stroke-width="1.35" stroke-dasharray="1.9 1.1" fill="none"/><circle cx="20" cy="20" r="9.5" fill="#fff48c" stroke="#575252" stroke-width="2.2"/><path d="M9 20 H13.2 M26.8 20 H31 M20 9 V13.2 M20 26.8 V31" stroke="#575252" stroke-width="1.4"/><circle cx="20" cy="20" r="5.2" fill="none" stroke="#575252" stroke-width="1"/><path d="M14.2 20 H16 M24 20 H25.8 M20 14.2 V16 M20 24 V25.8" stroke="#575252" stroke-width="1.3"/><path d="M20 16.6 L23.4 20 L20 23.4 L16.6 20 Z" fill="#ee2b3b"/></g></svg>
<div class="r" style="left:0px;top:528px;width:1674px;height:1px;background:rgba(110,110,118,0.45);"></div>
<div class="r" style="left:555px;top:971px;width:1365px;height:1px;background:#a29fa4;"></div>
<div class="r" style="left:0px;top:972px;width:83px;height:68px;background:#744c8c;box-sizing:border-box;border:1px solid #603e76;"></div>
<div class="r" style="left:918px;top:972px;width:83px;height:68px;background:#744c8c;box-sizing:border-box;border:1px solid #603e76;"></div>
<div class="r" style="left:1836px;top:972px;width:84px;height:68px;background:#744c8c;box-sizing:border-box;border:1px solid #603e76;"></div>
<div class="r" style="left:83px;top:972px;width:167px;height:68px;background:#f6f6f6;box-sizing:border-box;border:1px solid #8e9294;box-shadow:inset 0 0 0 1px #fcfcfc;"></div>
<div class="r" style="left:1001px;top:972px;width:167px;height:68px;background:#f6f6f6;box-sizing:border-box;border:1px solid #8e9294;box-shadow:inset 0 0 0 1px #fcfcfc;"></div>
<div class="r" style="left:250px;top:972px;width:167px;height:68px;background:#f6f6f6;box-sizing:border-box;border:1px solid #8e9294;box-shadow:inset 0 0 0 1px #fcfcfc;"></div>
<div class="r" style="left:1168px;top:972px;width:167px;height:68px;background:#f6f6f6;box-sizing:border-box;border:1px solid #8e9294;box-shadow:inset 0 0 0 1px #fcfcfc;"></div>
<div class="r" style="left:417px;top:972px;width:167px;height:68px;background:#f6f6f6;box-sizing:border-box;border:1px solid #8e9294;box-shadow:inset 0 0 0 1px #fcfcfc;"></div>
<div class="r" style="left:1335px;top:972px;width:167px;height:68px;background:#f6f6f6;box-sizing:border-box;border:1px solid #8e9294;box-shadow:inset 0 0 0 1px #fcfcfc;"></div>
<div class="r" style="left:584px;top:972px;width:167px;height:68px;background:#f6f6f6;box-sizing:border-box;border:1px solid #8e9294;box-shadow:inset 0 0 0 1px #fcfcfc;"></div>
<div class="r" style="left:1502px;top:972px;width:167px;height:68px;background:#f6f6f6;box-sizing:border-box;border:1px solid #8e9294;box-shadow:inset 0 0 0 1px #fcfcfc;"></div>
<div class="r" style="left:751px;top:972px;width:167px;height:68px;background:#f6f6f6;box-sizing:border-box;border:1px solid #8e9294;box-shadow:inset 0 0 0 1px #fcfcfc;"></div>
<div class="r" style="left:1669px;top:972px;width:167px;height:68px;background:#f6f6f6;box-sizing:border-box;border:1px solid #8e9294;box-shadow:inset 0 0 0 1px #fcfcfc;"></div>
<svg class="r" style="left:34px;top:995px;" width="16" height="22" viewBox="0 0 16 22"><path d="M15.5 0.8 L0.5 11 L15.5 21.2 Z" fill="#fff"/></svg>
<svg class="r" style="left:1870px;top:995px;" width="16" height="22" viewBox="0 0 16 22"><path d="M0.5 0.8 L15.5 11 L0.5 21.2 Z" fill="#fff"/></svg>
<div class="t" style="left:137.46px;top:990.00px;font-size:20px;letter-spacing:0.889px;">Futtat</div>
<div class="t" style="left:315.76px;top:990.00px;font-size:20px;letter-spacing:1.082px;">Fájl</div>
<div class="t" style="left:440.35px;top:990.00px;font-size:20px;letter-spacing:0.734px;">Szerkesztés</div>
<div class="t" style="left:631.76px;top:990.00px;font-size:20px;letter-spacing:1.015px;">Beszúr</div>
<div class="t" style="left:766.76px;top:990.00px;font-size:20px;letter-spacing:1.060px;">Mondat-szám</div>
<div class="t" style="left:1042.85px;top:990.00px;font-size:20px;letter-spacing:0.755px;">Sortörés</div>
<div class="t" style="left:1361.18px;top:990.00px;font-size:20px;letter-spacing:1.089px;">myNCT ON</div>
<div class="t" style="left:1723.06px;top:990.00px;font-size:20px;letter-spacing:1.006px;">Bezár</div>
<div class="t" style="left:1546.98px;top:977.00px;font-size:20px;letter-spacing:1.253px;">myNCT</div>
<div class="t" style="left:1543.47px;top:1003.00px;font-size:20px;letter-spacing:0.729px;">Autosize</div>
<div class="t" style="left:231.45px;top:1023.00px;font-size:14px;letter-spacing:-0.809px;color:#000080;">F1</div>
<div class="t" style="left:398.25px;top:1023.00px;font-size:14px;letter-spacing:-0.288px;color:#000080;">F2</div>
<div class="t" style="left:565.10px;top:1023.00px;font-size:14px;letter-spacing:0.171px;color:#000080;">F3</div>
<div class="t" style="left:731.95px;top:1023.00px;font-size:14px;letter-spacing:0.218px;color:#000080;">F4</div>
<div class="t" style="left:899.15px;top:1023.00px;font-size:14px;letter-spacing:0.393px;color:#000080;">F5</div>
<div class="t" style="left:1149.35px;top:1023.00px;font-size:14px;letter-spacing:-0.079px;color:#000080;">F6</div>
<div class="t" style="left:1316.35px;top:1023.00px;font-size:14px;letter-spacing:-0.238px;color:#000080;">F7</div>
<div class="t" style="left:1483.45px;top:1023.00px;font-size:14px;letter-spacing:-0.386px;color:#000080;">F8</div>
<div class="t" style="left:1650.25px;top:1023.00px;font-size:14px;letter-spacing:-0.330px;color:#000080;">F9</div>
<div class="t" style="left:1810.45px;top:1023.00px;font-size:14px;letter-spacing:-0.567px;color:#000080;">F10</div>
<div class="t" style="top:982.00px;font-size:16px;color:#fff;left:559.8px;width:800px;text-align:center;">E</div>
<div class="t" style="top:999.00px;font-size:16px;color:#fff;left:559.8px;width:800px;text-align:center;">S</div>
<div class="t" style="top:1016.00px;font-size:16px;color:#fff;left:559.8px;width:800px;text-align:center;">C</div>
<div class="gl">
<div class="t" style="left:50.68px;top:53.00px;font-size:20.5px;letter-spacing:1.075px;color:#3e3e3e;">SZERK</div>
<div class="t" style="left:764.01px;top:52.00px;font-size:21px;letter-spacing:1.775px;color:#444;">mm</div>
<div class="t" style="left:1514.28px;top:9.00px;font-size:21px;letter-spacing:0.592px;color:#444;">Mill 3AX</div>
<div class="t" style="left:1752.34px;top:6.00px;font-size:29px;letter-spacing:0.342px;color:#404040;"><svg class="g1" style="margin-right:0.342px" viewBox="0 0 1139 1466"><path transform="translate(0,1466) scale(1,-1)" d="M763 0H583V1147Q518 1085 412.5 1023T223 930V1104Q374 1175 487 1276T647 1466H763Z" fill="currentColor"/></svg><svg class="g1" style="margin-right:0.342px" viewBox="0 0 1139 1466"><path transform="translate(0,1466) scale(1,-1)" d="M763 0H583V1147Q518 1085 412.5 1023T223 930V1104Q374 1175 487 1276T647 1466H763Z" fill="currentColor"/></svg>:32:50</div>
<div class="t" style="left:1393.56px;top:53.00px;font-size:20.5px;letter-spacing:0.767px;">C:\NCT\NCT204\Programs\it2026\it0302_0<svg class="g1" style="margin-right:0.767px" viewBox="0 0 1139 1466"><path transform="translate(0,1466) scale(1,-1)" d="M763 0H583V1147Q518 1085 412.5 1023T223 930V1104Q374 1175 487 1276T647 1466H763Z" fill="currentColor"/></svg>.prg</div>
<div class="t" style="left:6.05px;top:114.00px;font-size:19px;letter-spacing:1.446px;">G54</div>
<div class="t" style="left:332.47px;top:114.00px;font-size:19px;letter-spacing:0.751px;">Abszolút pozíció</div>
<div class="t" style="left:731.14px;top:114.00px;font-size:19px;letter-spacing:-0.148px;">Maradékút</div>
<div class="t" style="left:1001.22px;top:114.00px;font-size:19px;letter-spacing:-0.338px;">Végpozíció</div>
<div class="t" style="left:40.91px;top:170.00px;font-size:63px;letter-spacing:0.000px;">X</div>
<div class="t" style="left:287.64px;top:170.00px;font-size:63px;letter-spacing:0.081px;"><svg class="g1" style="margin-right:0.081px" viewBox="0 0 1139 1466"><path transform="translate(0,1466) scale(1,-1)" d="M763 0H583V1147Q518 1085 412.5 1023T223 930V1104Q374 1175 487 1276T647 1466H763Z" fill="currentColor"/></svg><svg class="g1" style="margin-right:0.081px" viewBox="0 0 1139 1466"><path transform="translate(0,1466) scale(1,-1)" d="M763 0H583V1147Q518 1085 412.5 1023T223 930V1104Q374 1175 487 1276T647 1466H763Z" fill="currentColor"/></svg>.000</div>
<div class="t" style="left:481.19px;top:191.00px;font-size:38px;letter-spacing:-0.211px;">mm</div>
<div class="t" style="left:710.20px;top:185.00px;font-size:43.5px;letter-spacing:0.205px;">0.000</div>
<div class="t" style="left:958.26px;top:185.00px;font-size:43.5px;letter-spacing:0.194px;"><svg class="g1" style="margin-right:0.194px" viewBox="0 0 1139 1466"><path transform="translate(0,1466) scale(1,-1)" d="M763 0H583V1147Q518 1085 412.5 1023T223 930V1104Q374 1175 487 1276T647 1466H763Z" fill="currentColor"/></svg><svg class="g1" style="margin-right:0.194px" viewBox="0 0 1139 1466"><path transform="translate(0,1466) scale(1,-1)" d="M763 0H583V1147Q518 1085 412.5 1023T223 930V1104Q374 1175 487 1276T647 1466H763Z" fill="currentColor"/></svg>.000</div>
<div class="t" style="left:40.31px;top:299.00px;font-size:63px;letter-spacing:0.000px;">Y</div>
<div class="t" style="left:287.05px;top:299.00px;font-size:63px;letter-spacing:0.262px;">2<svg class="g1" style="margin-right:0.262px" viewBox="0 0 1139 1466"><path transform="translate(0,1466) scale(1,-1)" d="M763 0H583V1147Q518 1085 412.5 1023T223 930V1104Q374 1175 487 1276T647 1466H763Z" fill="currentColor"/></svg>.973</div>
<div class="t" style="left:481.19px;top:320.00px;font-size:38px;letter-spacing:-0.211px;">mm</div>
<div class="t" style="left:710.20px;top:314.00px;font-size:43.5px;letter-spacing:0.205px;">0.000</div>
<div class="t" style="left:957.62px;top:314.00px;font-size:43.5px;letter-spacing:0.365px;">2<svg class="g1" style="margin-right:0.365px" viewBox="0 0 1139 1466"><path transform="translate(0,1466) scale(1,-1)" d="M763 0H583V1147Q518 1085 412.5 1023T223 930V1104Q374 1175 487 1276T647 1466H763Z" fill="currentColor"/></svg>.973</div>
<div class="t" style="left:40.32px;top:428.00px;font-size:63px;letter-spacing:0.000px;">Z</div>
<div class="t" style="left:252.05px;top:428.00px;font-size:63px;letter-spacing:0.159px;">223.000</div>
<div class="t" style="left:481.19px;top:449.00px;font-size:38px;letter-spacing:-0.211px;">mm</div>
<div class="t" style="left:710.20px;top:443.00px;font-size:43.5px;letter-spacing:0.205px;">0.000</div>
<div class="t" style="left:933.73px;top:443.00px;font-size:43.5px;letter-spacing:0.219px;">223.000</div>
<div class="t" style="left:1124.90px;top:130.00px;font-size:50px;letter-spacing:0.000px;">F</div>
<div class="t" style="left:1326.55px;top:130.00px;font-size:50px;letter-spacing:0.740px;">0.000</div>
<div class="t" style="left:1458.22px;top:154.00px;font-size:22.5px;letter-spacing:0.494px;">mm/perc</div>
<div class="t" style="left:1614.59px;top:154.00px;font-size:22.5px;letter-spacing:0.449px;">40</div>
<div class="t" style="left:1643.30px;top:154.00px;font-size:22.5px;letter-spacing:0.000px;">%</div>
<div class="t" style="left:1358.95px;top:204.00px;font-size:22.5px;letter-spacing:0.411px;"><svg class="g1" style="margin-right:0.411px" viewBox="0 0 1139 1466"><path transform="translate(0,1466) scale(1,-1)" d="M763 0H583V1147Q518 1085 412.5 1023T223 930V1104Q374 1175 487 1276T647 1466H763Z" fill="currentColor"/></svg>000.000</div>
<div class="t" style="left:1458.22px;top:204.00px;font-size:22.5px;letter-spacing:0.494px;">mm/perc</div>
<div class="t" style="left:1614.59px;top:204.00px;font-size:22.5px;letter-spacing:0.449px;">40</div>
<div class="t" style="left:1643.30px;top:204.00px;font-size:22.5px;letter-spacing:0.000px;">%</div>
<div class="t" style="left:1125.96px;top:271.00px;font-size:52px;letter-spacing:0.000px;">S</div>
<div class="t" style="left:1326.25px;top:274.00px;font-size:50px;letter-spacing:0.888px;">0.0</div>
<div class="t" style="left:1401.60px;top:297.00px;font-size:22.5px;letter-spacing:0.091px;">/perc</div>
<div class="t" style="left:1595.05px;top:297.00px;font-size:22.5px;letter-spacing:0.740px;"><svg class="g1" style="margin-right:0.740px" viewBox="0 0 1139 1466"><path transform="translate(0,1466) scale(1,-1)" d="M763 0H583V1147Q518 1085 412.5 1023T223 930V1104Q374 1175 487 1276T647 1466H763Z" fill="currentColor"/></svg>00</div>
<div class="t" style="left:1636.90px;top:297.00px;font-size:22.5px;letter-spacing:0.000px;">%</div>
<div class="t" style="left:1385.82px;top:348.00px;font-size:22.5px;letter-spacing:0.000px;">0</div>
<div class="t" style="left:1401.60px;top:348.00px;font-size:22.5px;letter-spacing:0.091px;">/perc</div>
<div class="t" style="left:1519.06px;top:348.00px;font-size:22.5px;letter-spacing:1.326px;">M5</div>
<div class="t" style="left:1616.06px;top:348.00px;font-size:22.5px;letter-spacing:0.803px;">M<svg class="g1" style="margin-right:0.803px" viewBox="0 0 1139 1466"><path transform="translate(0,1466) scale(1,-1)" d="M763 0H583V1147Q518 1085 412.5 1023T223 930V1104Q374 1175 487 1276T647 1466H763Z" fill="currentColor"/></svg><svg class="g1" style="margin-right:0.803px" viewBox="0 0 1139 1466"><path transform="translate(0,1466) scale(1,-1)" d="M763 0H583V1147Q518 1085 412.5 1023T223 930V1104Q374 1175 487 1276T647 1466H763Z" fill="currentColor"/></svg></div>
<div class="t" style="left:1125.30px;top:446.00px;font-size:50px;letter-spacing:0.000px;">T</div>
<div class="t" style="left:1259.56px;top:446.00px;font-size:50px;letter-spacing:0.000px;"><svg class="g1" viewBox="0 0 1139 1466"><path transform="translate(0,1466) scale(1,-1)" d="M763 0H583V1147Q518 1085 412.5 1023T223 930V1104Q374 1175 487 1276T647 1466H763Z" fill="currentColor"/></svg></div>
<div class="t" style="left:1371.19px;top:446.00px;font-size:24.5px;letter-spacing:0.728px;color:#5f5f7c;">D000</div>
<div class="t" style="left:1371.19px;top:472.00px;font-size:24.5px;letter-spacing:0.728px;color:#5f5f7c;">H000</div>
<div class="t" style="left:1520.17px;top:444.00px;font-size:24px;letter-spacing:1.362px;color:#636363;">Q=0</div>
<div class="t" style="left:1520.47px;top:472.00px;font-size:24px;letter-spacing:0.946px;color:#636363;">Ø0.000</div>
<div class="t" style="left:1127.51px;top:501.00px;font-size:23px;letter-spacing:0.936px;">FaceMill -</div>
<div class="t" style="left:983.10px;top:559.00px;font-size:20px;letter-spacing:0.374px;color:#00008b;">Gépi pozíció:</div>
<div class="t" style="left:1384.56px;top:559.00px;font-size:20px;letter-spacing:0.394px;color:#00008b;">Bemérési pozíció:</div>
<div class="t" style="left:841.87px;top:602.00px;font-size:47px;letter-spacing:0.000px;">X</div>
<div class="t" style="left:1029.59px;top:603.00px;font-size:46px;letter-spacing:0.918px;"><svg class="g1" style="margin-right:0.918px" viewBox="0 0 1139 1466"><path transform="translate(0,1466) scale(1,-1)" d="M763 0H583V1147Q518 1085 412.5 1023T223 930V1104Q374 1175 487 1276T647 1466H763Z" fill="currentColor"/></svg>0.000</div>
<div class="t" style="left:1175.82px;top:618.00px;font-size:28.5px;letter-spacing:0.867px;">mm</div>
<div class="t" style="left:1267.37px;top:602.00px;font-size:47px;letter-spacing:0.000px;">X</div>
<div class="t" style="left:1455.79px;top:603.00px;font-size:46px;letter-spacing:0.818px;"><svg class="g1" style="margin-right:0.818px" viewBox="0 0 1139 1466"><path transform="translate(0,1466) scale(1,-1)" d="M763 0H583V1147Q518 1085 412.5 1023T223 930V1104Q374 1175 487 1276T647 1466H763Z" fill="currentColor"/></svg><svg class="g1" style="margin-right:0.818px" viewBox="0 0 1139 1466"><path transform="translate(0,1466) scale(1,-1)" d="M763 0H583V1147Q518 1085 412.5 1023T223 930V1104Q374 1175 487 1276T647 1466H763Z" fill="currentColor"/></svg>.000</div>
<div class="t" style="left:1602.12px;top:618.00px;font-size:28.5px;letter-spacing:0.267px;">mm</div>
<div class="t" style="left:841.87px;top:679.00px;font-size:47px;letter-spacing:0.000px;">Y</div>
<div class="t" style="left:1029.50px;top:680.00px;font-size:46px;letter-spacing:0.936px;">20.000</div>
<div class="t" style="left:1175.82px;top:695.00px;font-size:28.5px;letter-spacing:0.867px;">mm</div>
<div class="t" style="left:1267.37px;top:679.00px;font-size:47px;letter-spacing:0.000px;">Y</div>
<div class="t" style="left:1455.70px;top:680.00px;font-size:46px;letter-spacing:0.882px;">2<svg class="g1" style="margin-right:0.882px" viewBox="0 0 1139 1466"><path transform="translate(0,1466) scale(1,-1)" d="M763 0H583V1147Q518 1085 412.5 1023T223 930V1104Q374 1175 487 1276T647 1466H763Z" fill="currentColor"/></svg>.973</div>
<div class="t" style="left:1602.12px;top:695.00px;font-size:28.5px;letter-spacing:0.267px;">mm</div>
<div class="t" style="left:882.30px;top:751.00px;font-size:20px;letter-spacing:0.378px;">Sz korrekció:</div>
<div class="t" style="left:1071.18px;top:745.00px;font-size:30.5px;letter-spacing:0.000px;"><svg class="g1" viewBox="0 0 1139 1466"><path transform="translate(0,1466) scale(1,-1)" d="M763 0H583V1147Q518 1085 412.5 1023T223 930V1104Q374 1175 487 1276T647 1466H763Z" fill="currentColor"/></svg></div>
<div class="t" style="left:1162.46px;top:751.00px;font-size:20px;letter-spacing:0.421px;">Ref tengely:</div>
<div class="t" style="left:1347.64px;top:745.00px;font-size:30.5px;letter-spacing:0.000px;">Z</div>
<div class="t" style="left:1501.88px;top:745.00px;font-size:30.5px;letter-spacing:0.432px;">G54</div>
<div class="t" style="left:929.20px;top:791.00px;font-size:20px;letter-spacing:0.228px;">Geometria</div>
<div class="t" style="left:1225.46px;top:791.00px;font-size:20px;letter-spacing:0.563px;">Kopás</div>
<div class="t" style="left:1457.46px;top:791.00px;font-size:20px;letter-spacing:0.378px;">Nullpont eltolás:</div>
<div class="t" style="left:845.00px;top:822.00px;font-size:30.5px;letter-spacing:0.000px;color:#808080;">D</div>
<div class="t" style="left:975.17px;top:823.00px;font-size:31px;letter-spacing:1.103px;color:#808080;">80.000</div>
<div class="t" style="left:1077.25px;top:832.00px;font-size:20.5px;letter-spacing:-1.057px;color:#808080;">mm</div>
<div class="t" style="left:1251.87px;top:826.00px;font-size:31.5px;letter-spacing:0.780px;color:#808080;">0.000</div>
<div class="t" style="left:1335.25px;top:835.00px;font-size:20.5px;letter-spacing:-0.957px;color:#808080;">mm</div>
<div class="t" style="left:1402.84px;top:825.00px;font-size:30px;letter-spacing:1.718px;color:#8a8a8a;">N<svg class="g1" style="margin-right:1.718px" viewBox="0 0 1139 1466"><path transform="translate(0,1466) scale(1,-1)" d="M763 0H583V1147Q518 1085 412.5 1023T223 930V1104Q374 1175 487 1276T647 1466H763Z" fill="currentColor"/></svg></div>
<div class="t" style="left:1501.89px;top:825.00px;font-size:30px;letter-spacing:1.315px;color:#8a8a8a;">Q=0</div>
<div class="t" style="left:1397.23px;top:875.00px;font-size:30.5px;letter-spacing:0.000px;">X</div>
<div class="t" style="left:1548.02px;top:875.00px;font-size:31px;letter-spacing:1.074px;"><svg class="g1" style="margin-right:1.074px" viewBox="0 0 1139 1466"><path transform="translate(0,1466) scale(1,-1)" d="M763 0H583V1147Q518 1085 412.5 1023T223 930V1104Q374 1175 487 1276T647 1466H763Z" fill="currentColor"/></svg>.000</div>
<div class="t" style="left:1631.25px;top:884.00px;font-size:20.5px;letter-spacing:-0.757px;">mm</div>
<div class="t" style="left:1397.23px;top:930.00px;font-size:30.5px;letter-spacing:0.000px;">Y</div>
<div class="t" style="left:1548.02px;top:930.00px;font-size:31px;letter-spacing:1.113px;"><svg class="g1" style="margin-right:1.113px" viewBox="0 0 1139 1466"><path transform="translate(0,1466) scale(1,-1)" d="M763 0H583V1147Q518 1085 412.5 1023T223 930V1104Q374 1175 487 1276T647 1466H763Z" fill="currentColor"/></svg>.973</div>
<div class="t" style="left:1631.25px;top:939.00px;font-size:20.5px;letter-spacing:-0.757px;">mm</div>
</div>
</body></html>
